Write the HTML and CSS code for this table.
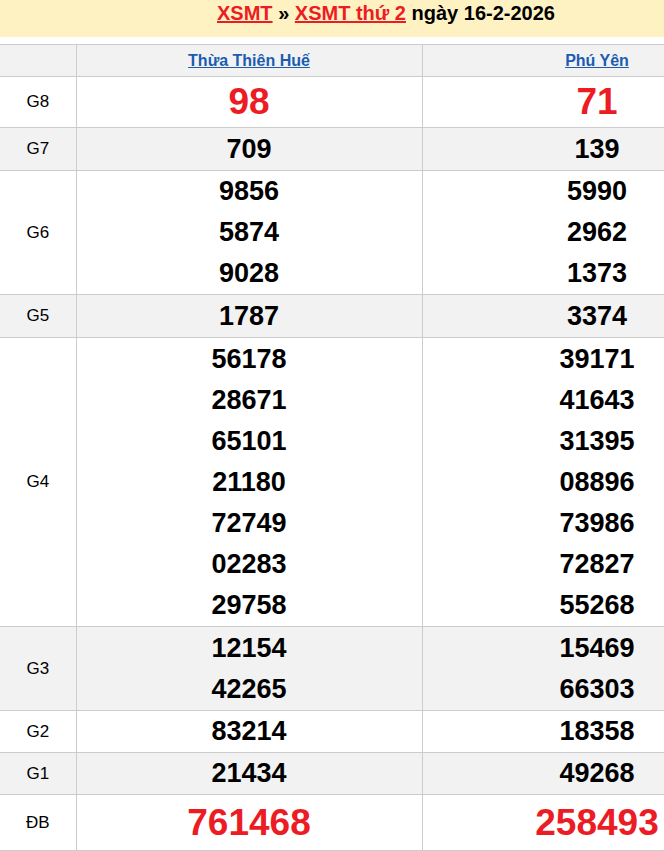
FILE: index.html
```html
<!DOCTYPE html>
<html lang="vi">
<head>
<meta charset="utf-8">
<title>XSMT thứ 2 ngày 16-2-2026</title>
<link rel="stylesheet" href="styles.css">
</head>
<body>
<div class="page">
  <div class="board">
    <h2 class="title"><a href="#" class="title-link">XSMT</a> » <a href="#" class="title-link">XSMT thứ 2</a> ngày 16-2-2026</h2>
    <table class="results">
      <colgroup>
        <col class="col-label">
        <col class="col-prov1">
        <col class="col-prov2">
      </colgroup>
      <thead>
        <tr class="row-head">
          <th class="cell-label"></th>
          <th class="cell-prov"><a href="#" class="prov-link">Thừa Thiên Huế</a></th>
          <th class="cell-prov"><a href="#" class="prov-link">Phú Yên</a></th>
        </tr>
      </thead>
      <tbody>
        <tr class="row-g8">
          <td class="cell-label">G8</td>
          <td class="cell-num"><div class="num num-big">98</div></td>
          <td class="cell-num"><div class="num num-big">71</div></td>
        </tr>
        <tr class="row-alt row-pad">
          <td class="cell-label">G7</td>
          <td class="cell-num"><div class="num">709</div></td>
          <td class="cell-num"><div class="num">139</div></td>
        </tr>
        <tr>
          <td class="cell-label">G6</td>
          <td class="cell-num"><div class="num">9856</div><div class="num">5874</div><div class="num">9028</div></td>
          <td class="cell-num"><div class="num">5990</div><div class="num">2962</div><div class="num">1373</div></td>
        </tr>
        <tr class="row-alt row-pad">
          <td class="cell-label">G5</td>
          <td class="cell-num"><div class="num">1787</div></td>
          <td class="cell-num"><div class="num">3374</div></td>
        </tr>
        <tr class="row-pad">
          <td class="cell-label">G4</td>
          <td class="cell-num"><div class="num">56178</div><div class="num">28671</div><div class="num">65101</div><div class="num">21180</div><div class="num">72749</div><div class="num">02283</div><div class="num">29758</div></td>
          <td class="cell-num"><div class="num">39171</div><div class="num">41643</div><div class="num">31395</div><div class="num">08896</div><div class="num">73986</div><div class="num">72827</div><div class="num">55268</div></td>
        </tr>
        <tr class="row-alt row-pad">
          <td class="cell-label">G3</td>
          <td class="cell-num"><div class="num">12154</div><div class="num">42265</div></td>
          <td class="cell-num"><div class="num">15469</div><div class="num">66303</div></td>
        </tr>
        <tr>
          <td class="cell-label">G2</td>
          <td class="cell-num"><div class="num">83214</div></td>
          <td class="cell-num"><div class="num">18358</div></td>
        </tr>
        <tr class="row-alt">
          <td class="cell-label">G1</td>
          <td class="cell-num"><div class="num">21434</div></td>
          <td class="cell-num"><div class="num">49268</div></td>
        </tr>
        <tr class="row-db">
          <td class="cell-label">ĐB</td>
          <td class="cell-num"><div class="num num-db">761468</div></td>
          <td class="cell-num"><div class="num num-db">258493</div></td>
        </tr>
      </tbody>
    </table>
  </div>
</div>
</body>
</html>
```

FILE: styles.css
```css
html, body {
  margin: 0;
  padding: 0;
  background: #ffffff;
}

body {
  font-family: "Liberation Sans", Arial, sans-serif;
  color: #000000;
}

.page {
  width: 100%;
  overflow: hidden;
}

.board {
  width: 772px;
}

.title {
  margin: 0 0 7px;
  height: 37px;
  box-sizing: border-box;
  padding-top: 2px;
  background: #fff2c2;
  text-align: center;
  font-size: 20px;
  font-weight: bold;
  line-height: 23px;
  color: #000000;
}

.title-link {
  color: #ec1c24;
  text-decoration: underline;
}

.results {
  width: 772px;
  border-collapse: collapse;
  table-layout: fixed;
}

.col-label {
  width: 76px;
}

.col-prov1 {
  width: 346px;
}

.col-prov2 {
  width: 350px;
}

.results th,
.results td {
  border: 1px solid #cccccc;
  padding: 0;
  text-align: center;
  vertical-align: middle;
}

.results tr > :first-child {
  border-left: none;
}

.row-head {
  background: #f2f2f2;
  height: 32px;
}

.prov-link {
  font-size: 16px;
  font-weight: bold;
  color: #1b5cb0;
  text-decoration: underline;
}

.row-alt {
  background: #f2f2f2;
}

.row-pad .cell-num {
  padding-top: 1px;
}

.results .cell-label {
  font-size: 17px;
  color: #000000;
}

.num {
  font-size: 27px;
  font-weight: bold;
  line-height: 41px;
  color: #000000;
}

.num.num-big {
  font-size: 37px;
  line-height: 50px;
  color: #ec1c24;
}

.num.num-db {
  font-size: 37px;
  line-height: 55px;
  color: #ec1c24;
}
```
